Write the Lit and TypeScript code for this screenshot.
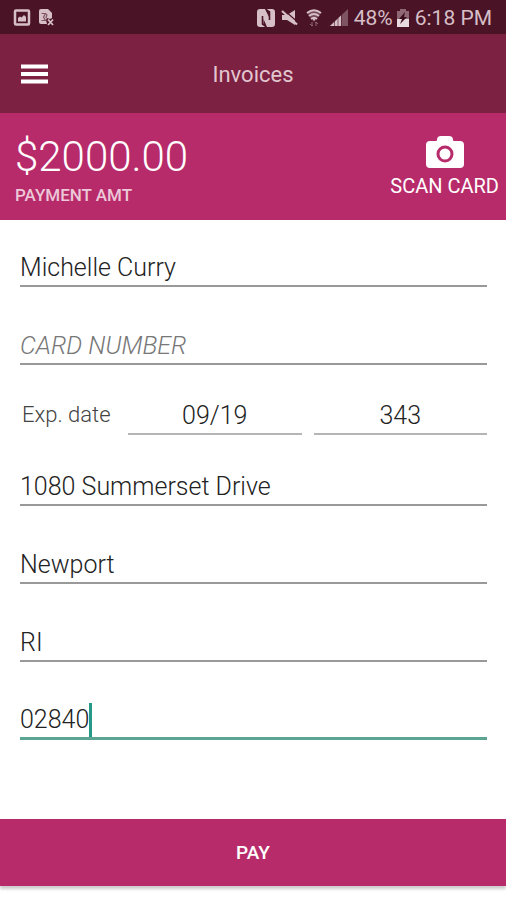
import { LitElement, html, css } from "lit";
import { customElement } from "lit/decorators.js";

@customElement("status-bar")
class StatusBar extends LitElement {
  static styles = css`
    :host {
      display: flex;
      align-items: center;
      justify-content: space-between;
      box-sizing: border-box;
      height: 34px;
      padding: 2px 14px 0 13px;
      background: #4b1426;
      color: #d6bfc7;
      font-size: 21px;
      line-height: 24px;
    }
    .group {
      display: flex;
      align-items: center;
      gap: 6px;
    }
    svg {
      display: block;
    }
    .battery {
      display: flex;
      align-items: center;
      gap: 4px;
    }
  `;

  render() {
    return html`
      <div class="group">
        <svg width="18" height="18" viewBox="0 0 18 18" role="img" aria-label="Screenshot saved">
          <rect x="2" y="1.500" width="14" height="14" rx="1" fill="none" stroke="#d6bfc7" stroke-width="2.500" />
          <path d="M5 12.500V9l2-1.500 1.500 1L11 6l2 2v4.500z" fill="#d6bfc7" />
        </svg>
        <svg width="18" height="18" viewBox="0 0 18 18" role="img" aria-label="File error">
          <path d="M2 2q0-2 2-2h7l4 4v5l-2 1-3-1-1 2 1 4H4q-2 0-2-2z" fill="#d6bfc7" />
          <path d="M4.500 4.500h4L6.500 8l2 3.500h-4M10 5l-1 4" stroke="#7e5462" stroke-width="1.200" fill="none" />
          <path d="M11 10.500l5 5.500M16 10.500l-5 5.500" stroke="#d6bfc7" stroke-width="1.800" />
        </svg>
      </div>
      <div class="group">
        <svg width="18" height="18" viewBox="0 0 18 18" role="img" aria-label="NFC">
          <path d="M3 0h5l4.500 9V3H14v12l-2 0L5.500 4v11.500L8 18H3q-3 0-3-3V3q0-3 3-3z" fill="#d6bfc7" />
          <path d="M10 0h5q3 0 3 3v12q0 3-3 3h-5L6.500 10v5H4V3l2.500 0L12.500 14V2.500z" fill="#d6bfc7" />
          <path d="M5.500 7v8l1.500 1M12.500 11V3L11 2" stroke="#4b1426" stroke-width="1.600" fill="none" />
        </svg>
        <svg width="17" height="18" viewBox="0 0 17 18" role="img" aria-label="Muted">
          <path d="M1 6h5l8-5v15l-8-5H1z" fill="#d6bfc7" />
          <path d="M3.500 1.500l12 10.500" stroke="#4b1426" stroke-width="1.200" />
          <path d="M1 2l15 13.500" stroke="#d6bfc7" stroke-width="2.200" />
        </svg>
        <svg width="20" height="18" viewBox="0 0 20 18" role="img" aria-label="Wi-Fi">
          <path d="M3 4q7-5.500 14 0l-7 9z" fill="#d6bfc7" opacity=".3" />
          <path d="M3 4q7-5.500 14 0M5 7q5-4 10 0M7 10q3-2.500 6 0" stroke="#d6bfc7" stroke-width="2" fill="none" />
          <path d="M8 9h4l-2 3z" fill="#d6bfc7" />
          <path d="M8 13v4M6 15l2 2 1-1M12 17v-4M11 14l1-1 2 2" stroke="#8f6673" stroke-width="1" fill="none" />
        </svg>
        <svg width="18" height="18" viewBox="0 0 18 18" role="img" aria-label="Signal">
          <path d="M0 17L18 0v17z" fill="#7e5462" />
          <path d="M0 17L11 6.500V17z" fill="#d6bfc7" />
          <path d="M4.500 12v5M8 9v8M11.500 5v12" stroke="#4b1426" stroke-width=".6" />
        </svg>
        <div class="battery">
          <span>48%</span>
          <svg width="12" height="18" viewBox="0 0 12 18" role="img" aria-label="Charging">
            <path d="M0 2h3V0h6v2h3v16H0z" fill="#8f6673" />
            <path d="M0 10h12v8H0z" fill="#e8dadf" />
            <path d="M8 3L2 10h3l-2 5 7-7H7z" fill="#3a0c1b" />
          </svg>
        </div>
        <span>6:18 PM</span>
      </div>
    `;
  }
}

@customElement("app-root")
class AppRoot extends LitElement {
  static styles = css`
    :host {
      display: flex;
      flex-direction: column;
      min-height: 100vh;
      background: #fff;
      font-family: Roboto, "Liberation Sans", sans-serif;
      color: #222;
    }
    button,
    input {
      font: inherit;
      color: inherit;
      border: 0;
      border-radius: 0;
      padding: 0;
      margin: 0;
      background: none;
      outline: none;
    }
    svg {
      display: block;
    }
    .bar {
      display: grid;
      grid-template-columns: 1fr auto 1fr;
      align-items: center;
      height: 79px;
      padding: 0 21px;
      background: #7c2141;
    }
    .menu {
      justify-self: start;
    }
    h1 {
      margin: 0;
      padding-top: 2px;
      font-size: 22px;
      line-height: 28px;
      font-weight: 400;
      color: #e2c6d0;
    }
    .summary {
      display: flex;
      justify-content: space-between;
      align-items: center;
      box-sizing: border-box;
      height: 107px;
      padding: 0 7px 0 15px;
      background: #b82b6b;
      color: #fff;
    }
    .totals {
      padding-top: 6px;
    }
    .amount {
      font-size: 42px;
      line-height: 50px;
      font-weight: 300;
    }
    .caption {
      font-size: 17px;
      line-height: 26px;
      font-weight: 500;
      color: #ecc8d8;
    }
    .scan {
      display: flex;
      flex-direction: column;
      align-items: center;
      gap: 4px;
      font-size: 20px;
      line-height: 24px;
    }
    form {
      flex: 1;
      display: flex;
      flex-direction: column;
    }
    .fields {
      display: flex;
      flex-direction: column;
      gap: 38px;
      padding: 27px 19px 24px 20px;
      font-size: 25px;
      font-weight: 300;
    }
    .field {
      box-sizing: border-box;
      width: 100%;
      height: 40px;
      padding-top: 2px;
      border-bottom: 2px solid #999;
    }
    .field::placeholder {
      color: #777;
      font-style: italic;
      opacity: 1;
    }
    .row {
      display: grid;
      grid-template-columns: 96px 1fr 1fr;
      column-gap: 12px;
      align-items: center;
      margin: -8px 0 -7px;
    }
    .row .field {
      text-align: center;
      border-color: #b5b5b5;
    }
    .row label {
      font-size: 22px;
      line-height: 26px;
      color: #444;
      padding-left: 2px;
    }
    .active {
      display: flex;
      align-items: center;
      border-bottom: 3px solid #5da593;
    }
    .active input {
      field-sizing: content;
    }
    .caret {
      width: 3px;
      height: 34px;
      background: #26998a;
    }
    .pay {
      margin-top: auto;
      margin-bottom: 14px;
      height: 67px;
      background: #b82b6b;
      color: #fff;
      font-size: 19px;
      font-weight: 500;
      box-shadow: 0 3px 3px #ccc;
    }
  `;

  render() {
    return html`
      <status-bar></status-bar>
      <header class="bar">
        <button class="menu" aria-label="Menu">
          <svg width="27" height="20" viewBox="0 0 27 20">
            <path d="M0 2.500h27M0 10h27M0 17.500h27" stroke="#fff" stroke-width="4" />
          </svg>
        </button>
        <h1>Invoices</h1>
      </header>
      <section class="summary">
        <div class="totals">
          <div class="amount">$2000.00</div>
          <div class="caption">PAYMENT AMT</div>
        </div>
        <button class="scan">
          <svg width="38" height="34" viewBox="0 0 38 34" aria-hidden="true">
            <path
              d="M4 5h6q1 0 1-1 0-4 4-4h8q4 0 4 4 0 1 1 1h6q4 0 4 4v19q0 4-4 4H4q-4 0-4-4V9q0-4 4-4z"
              fill="#fff"
            />
            <circle cx="19" cy="18" r="7" fill="none" stroke="#b82b6b" stroke-width="3" />
          </svg>
          SCAN CARD
        </button>
      </section>
      <form @submit=${(e: Event) => e.preventDefault()}>
        <div class="fields">
          <input class="field" aria-label="Name on card" value="Michelle Curry" />
          <input class="field" aria-label="Card number" placeholder="CARD NUMBER" />
          <div class="row">
            <label for="exp">Exp. date</label>
            <input class="field" id="exp" value="09/19" />
            <input class="field" aria-label="Security code" value="343" />
          </div>
          <input class="field" aria-label="Street address" value="1080 Summerset Drive" />
          <input class="field" aria-label="City" value="Newport" />
          <input class="field" aria-label="State" value="RI" />
          <div class="field active">
            <input aria-label="Zip code" value="02840" />
            <span class="caret"></span>
          </div>
        </div>
        <button class="pay">PAY</button>
      </form>
    `;
  }
}
